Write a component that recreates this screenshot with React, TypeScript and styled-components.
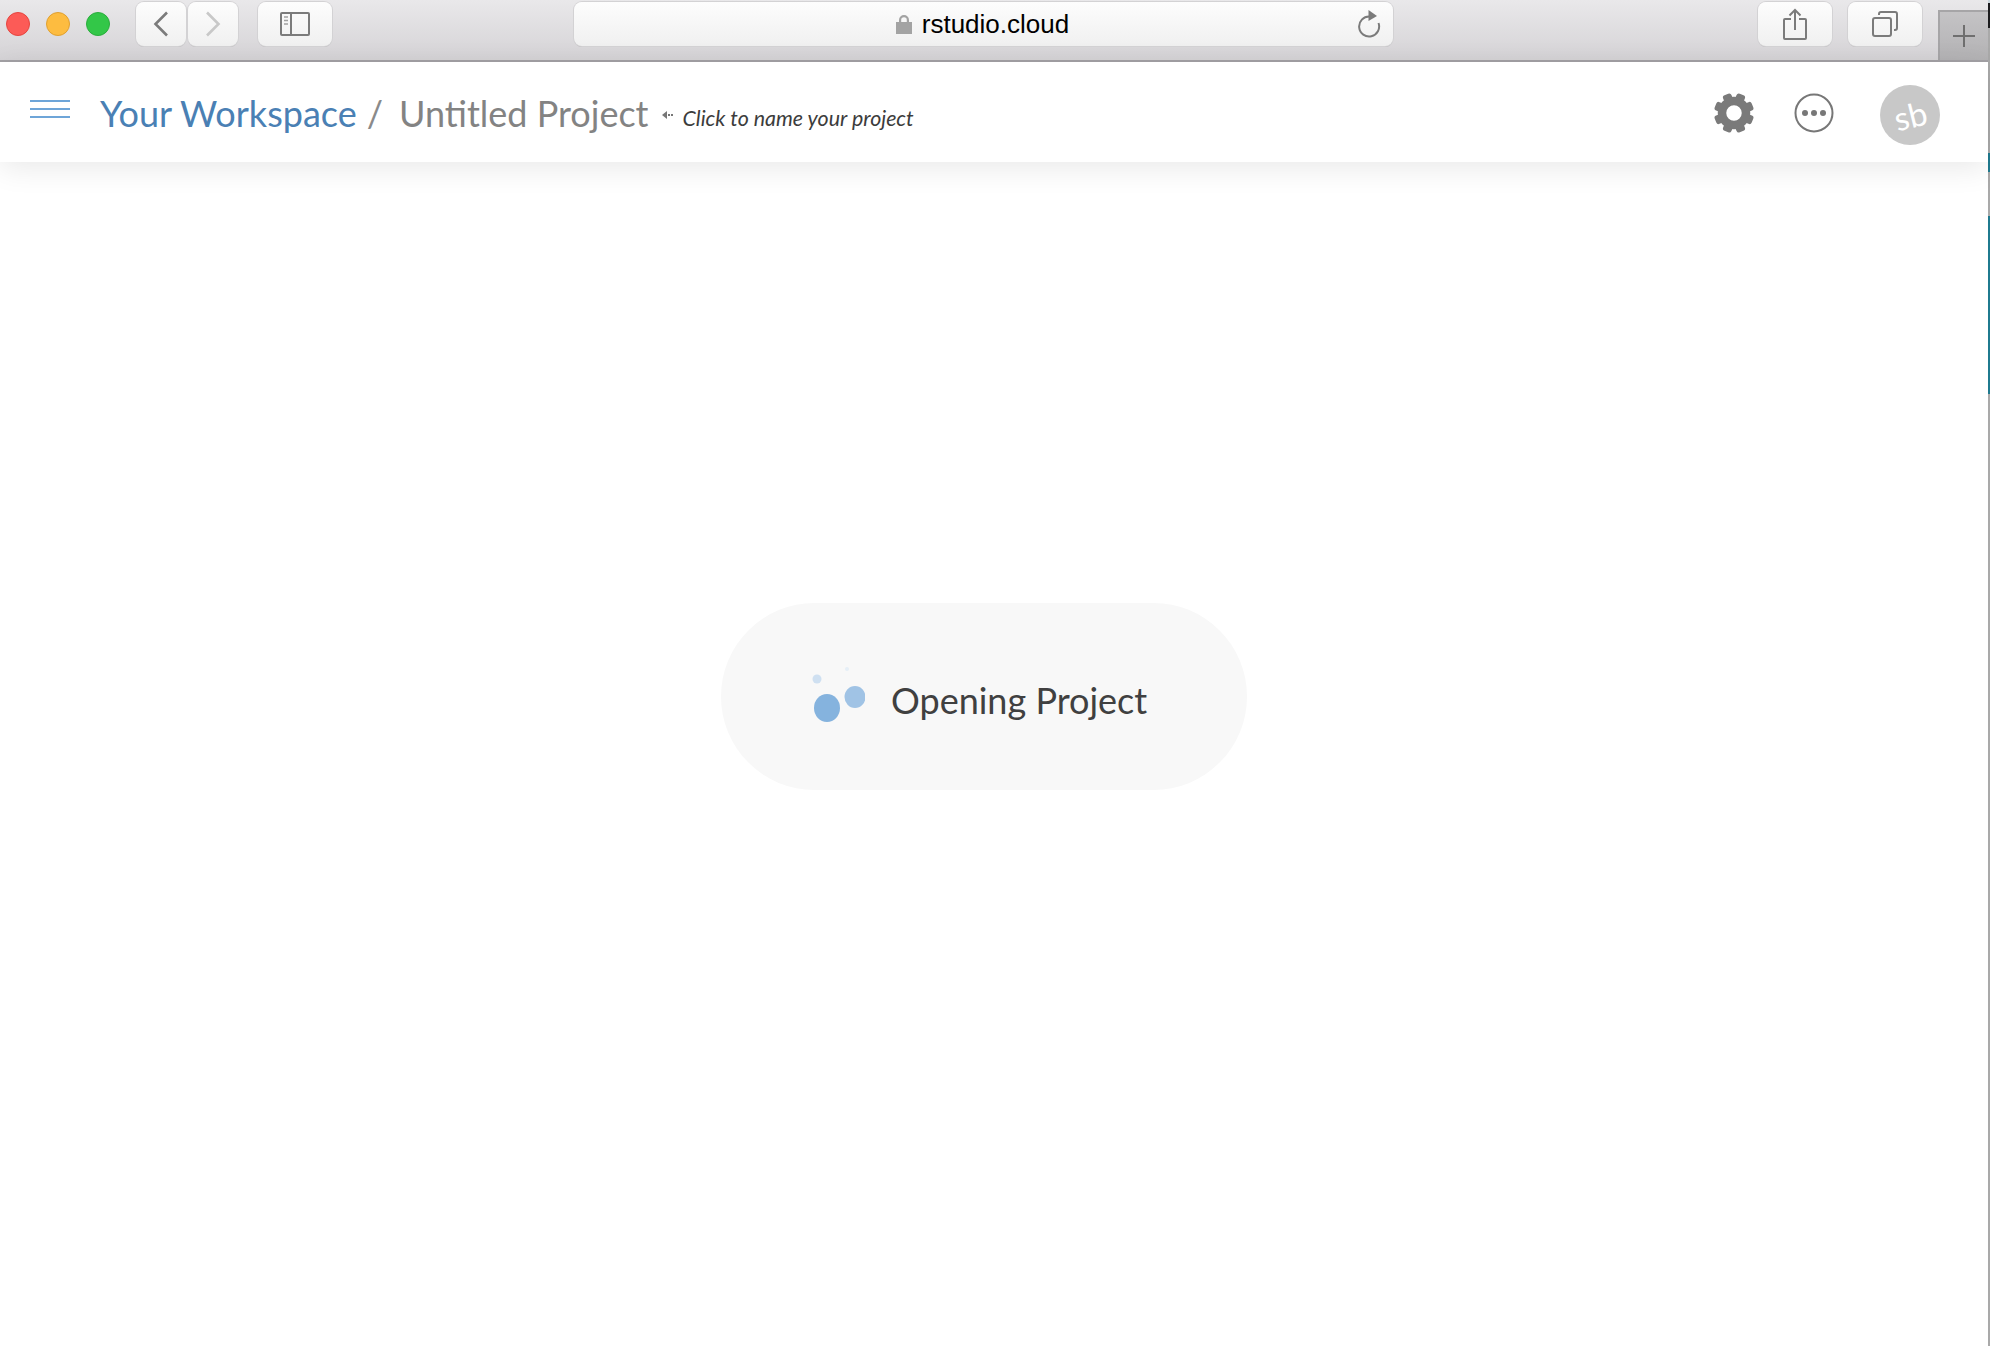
import styled, { createGlobalStyle } from "styled-components";

const Global = createGlobalStyle`
html, body { margin: 0; padding: 0; background: #fff; overflow: hidden; }
`;

const Page = styled.div`
display: flex;
width: 1990px;
height: 1346px;
overflow: hidden;
`;
const Main = styled.div`
flex: 1;
display: flex;
flex-direction: column;
min-width: 0;
`;
const EdgeStrip = styled.div`
width: 2px;
display: flex;
flex-direction: column;
background: #a9a9a9;
`;
const EdgePart = styled.div<{ $h: number; $c: string }>`
height: ${p => p.$h}px;
background: ${p => p.$c};
`;

const Chrome = styled.div`
height: 62px;
box-sizing: border-box;
flex: none;
display: flex;
align-items: flex-start;
padding: 2px 0 0 6px;
background: linear-gradient(#e9e8ea, #d5d3d6);
border-bottom: 2px solid #a3a1a5;
`;
const Lights = styled.div`
display: flex;
gap: 16px;
margin-top: 10px;
margin-right: 26px;
`;
const Light = styled.div<{ $c: string; $b: string }>`
width: 24px;
height: 24px;
box-sizing: border-box;
border-radius: 50%;
background: ${p => p.$c};
border: 1px solid ${p => p.$b};
`;
const ToolButton = styled.div<{ $w: number; $mr?: number }>`
width: ${p => p.$w}px;
height: 44px;
flex: none;
box-sizing: border-box;
margin-right: ${p => p.$mr ?? 0}px;
display: flex;
align-items: center;
justify-content: center;
border-radius: 8px;
background: linear-gradient(#fdfdfd, #f0f0f0);
box-shadow: 0 0 0 1px #d3d2d4, 0 1px 0 #b9b8ba;
`;
const Address = styled.div`
width: 819px;
height: 44px;
flex: none;
box-sizing: border-box;
margin: 0 365px 0 242px;
padding: 0 2px 0 0;
position: relative;
display: flex;
align-items: center;
justify-content: center;
border-radius: 8px;
background: linear-gradient(#fdfdfd, #f0f0f0);
box-shadow: 0 0 0 1px #d3d2d4, 0 1px 0 #b9b8ba;
`;
const Url = styled.span`
font: 26px "Liberation Sans", Arial, sans-serif;
color: #000;
margin-left: 10px;
line-height: 48px;
`;
const Reload = styled.svg`
position: absolute;
right: 12px;
top: 8px;
`;
const NewTab = styled.div`
width: 50px;
height: 50px;
flex: none;
box-sizing: border-box;
margin: 8px 0 0 16px;
display: flex;
align-items: center;
justify-content: center;
background: linear-gradient(#c4c3c5, #b3b2b4);
border: 2px solid #a6a5a7;
border-bottom: none;
border-right: none;
`;

const Header = styled.header`
height: 100px;
flex: none;
display: flex;
align-items: center;
padding: 0 48px 0 30px;
background: #fff;
box-shadow: 0 6px 28px rgba(0, 0, 0, 0.09);
position: relative;
font-family: Lato, sans-serif;
`;
const Burger = styled.div`
width: 40px;
height: 18px;
margin: -6px 30px 0 0;
display: flex;
flex-direction: column;
justify-content: space-between;
`;
const BurgerLine = styled.div`
height: 2px;
background: #6ea5d8;
`;
const WorkspaceLink = styled.span`
font-size: 36px;
color: #4a80b4;
`;
const Slash = styled.span`
font-size: 36px;
color: #8a8a8a;
margin: 0 16px 0 10px;
`;
const ProjectName = styled.span`
font-size: 36px;
color: #838383;
`;
const Crumbs = styled.div`
display: flex;
align-items: baseline;
margin-top: 2px;
`;
const Hint = styled.div`
display: flex;
align-items: center;
margin: 12px 0 0 13px;
font-size: 21.400px;
font-style: italic;
color: #3c3c3c;
`;
const HintArrow = styled.svg`
margin: -6px 9px 0 0;
`;
const Spacer = styled.div`
flex: 1;
`;
const GearIcon = styled.svg`
margin: 2px 39px 0 0;
`;
const MoreIcon = styled.svg`
margin: 2px 46px 0 0;
`;
const Avatar = styled.div`
width: 60px;
height: 60px;
margin-top: 6px;
border-radius: 50%;
background: #c8c8c8;
color: #fff;
font-size: 33px;
display: flex;
align-items: center;
justify-content: center;
`;
const AvatarText = styled.span`
transform: rotate(-14deg);
line-height: 1;
`;

const Content = styled.main`
flex: 1;
display: flex;
justify-content: center;
padding: 441px 20px 0 0;
box-sizing: border-box;
`;
const Pill = styled.div`
width: 526px;
height: 187px;
box-sizing: border-box;
padding: 0 0 0 90px;
display: flex;
align-items: center;
gap: 26px;
border-radius: 94px;
background: #f8f8f8;
font-family: Lato, sans-serif;
`;
const Bubbles = styled.svg`
flex: none;
margin-top: -5px;
`;
const PillText = styled.span`
font-size: 36px;
color: #404040;
margin-top: 6px;
`;

const gearTeeth = [22.5, 67.5, 112.5, 157.5, 202.5, 247.5, 292.5, 337.5];

export default function App() {
    return <Page>
        <Global />
        <Main>
            <Chrome>
                <Lights>
                    <Light $c="#fc5b57" $b="#e5453f" />
                    <Light $c="#fdbc40" $b="#e0a030" />
                    <Light $c="#33c748" $b="#2aad3c" />
                </Lights>
                <ToolButton $w={50} $mr={2}>
                    <svg width="16" height="26" viewBox="0 0 16 26" fill="none" stroke="#7b7b7b" strokeWidth="2.6"><path d="M14 1.500 2.500 13 14 24.500" /></svg>
                </ToolButton>
                <ToolButton $w={50} $mr={20}>
                    <svg width="16" height="26" viewBox="0 0 16 26" fill="none" stroke="#c8c8c8" strokeWidth="2.6"><path d="M2 1.500 13.500 13 2 24.500" /></svg>
                </ToolButton>
                <ToolButton $w={74}>
                    <svg width="30" height="24" viewBox="0 0 30 24" fill="none" stroke="#7b7b7b" strokeWidth="2">
                        <rect x="1" y="1" width="28" height="22" rx="1" />
                        <path d="M11 1v22" />
                        <path d="M4 5h4M4 8.500h4M4 12h4" strokeWidth="1.5" stroke="#a0a0a0" />
                    </svg>
                </ToolButton>
                <Address>
                    <svg width="16" height="20" viewBox="0 0 16 20" fill="#a3a3a3">
                        <rect x="0" y="8" width="16" height="12" />
                        <path d="M3 9V6a5 5 0 0 1 10 0v3h-2.200V6a2.800 2.800 0 0 0-5.600 0v3z" />
                    </svg>
                    <Url>rstudio.cloud</Url>
                    <Reload width="24" height="28" viewBox="0 0 24 28" fill="none">
                        <path d="M12.500 6.500A10 10 0 1 0 21.500 13" stroke="#7b7b7b" strokeWidth="2" />
                        <path d="M11.500 0 20 6l-8.500 5z" fill="#7b7b7b" />
                    </Reload>
                </Address>
                <ToolButton $w={74} $mr={16}>
                    <svg width="24" height="32" viewBox="0 0 24 32" fill="none" stroke="#7b7b7b" strokeWidth="2">
                        <path d="M8 11H2a1 1 0 0 0-1 1v18a1 1 0 0 0 1 1h20a1 1 0 0 0 1-1V12a1 1 0 0 0-1-1h-6" />
                        <path d="M12 22V2M6.500 7.500 12 2l5.500 5.500" />
                    </svg>
                </ToolButton>
                <ToolButton $w={74}>
                    <svg width="26" height="26" viewBox="0 0 26 26" fill="none" stroke="#7b7b7b" strokeWidth="2">
                        <rect x="1" y="7" width="18" height="18" rx="2" />
                        <path d="M7 4V3a2 2 0 0 1 2-2h14a2 2 0 0 1 2 2v14a2 2 0 0 1-2 2h-1" />
                    </svg>
                </ToolButton>
                <NewTab>
                    <svg width="22" height="22" viewBox="0 0 22 22" stroke="#6f6f6f" strokeWidth="2"><path d="M11 0v22M0 11h22" /></svg>
                </NewTab>
            </Chrome>
            <Header>
                <Burger>
                    <BurgerLine />
                    <BurgerLine />
                    <BurgerLine />
                </Burger>
                <Crumbs>
                    <WorkspaceLink>Your Workspace</WorkspaceLink>
                    <Slash>/</Slash>
                    <ProjectName>Untitled Project</ProjectName>
                </Crumbs>
                <Hint>
                    <HintArrow width="12" height="10" viewBox="0 0 12 10" fill="#777">
                        <path d="M0 5 5 1v8z" />
                        <rect x="6" y="4" width="2" height="2" />
                        <rect x="9" y="4" width="2" height="2" />
                    </HintArrow>
                    Click to name your project
                </Hint>
                <Spacer />
                <GearIcon width="42" height="42" viewBox="0 0 42 42" fill="#7a7a7a">
                    {gearTeeth.map(a => <rect key={a} x="16.500" y="1" width="9" height="10" rx="2.500" transform={`rotate(${a} 21 21)`} />)}
                    <circle cx="21" cy="21" r="12" fill="none" stroke="#7a7a7a" strokeWidth="8.500" />
                </GearIcon>
                <MoreIcon width="40" height="40" viewBox="0 0 40 40" fill="#777">
                    <circle cx="20" cy="20" r="18.500" fill="none" stroke="#777" strokeWidth="2" />
                    <circle cx="11" cy="20" r="3" />
                    <circle cx="20" cy="20" r="3" />
                    <circle cx="29" cy="20" r="3" />
                </MoreIcon>
                <Avatar><AvatarText>sb</AvatarText></Avatar>
            </Header>
            <Content>
                <Pill>
                    <Bubbles width="54" height="56" viewBox="0 0 54 56">
                        <circle cx="6" cy="13" r="4.500" fill="#cfe0f1" />
                        <circle cx="36" cy="3" r="2" fill="#e6eff7" />
                        <ellipse cx="16" cy="42" rx="13" ry="14" fill="#85b3de" />
                        <ellipse cx="44" cy="31" rx="10.500" ry="11" fill="#a0c3e5" />
                    </Bubbles>
                    <PillText>Opening Project</PillText>
                </Pill>
            </Content>
        </Main>
        <EdgeStrip>
            <EdgePart $h={3} $c="#c9d4da" />
            <EdgePart $h={25} $c="#1b1b1d" />
            <EdgePart $h={125} $c="#a9a9a9" />
            <EdgePart $h={19} $c="#1f7a8f" />
            <EdgePart $h={44} $c="#a9a9a9" />
            <EdgePart $h={178} $c="#1f7a8f" />
        </EdgeStrip>
    </Page>;
}
